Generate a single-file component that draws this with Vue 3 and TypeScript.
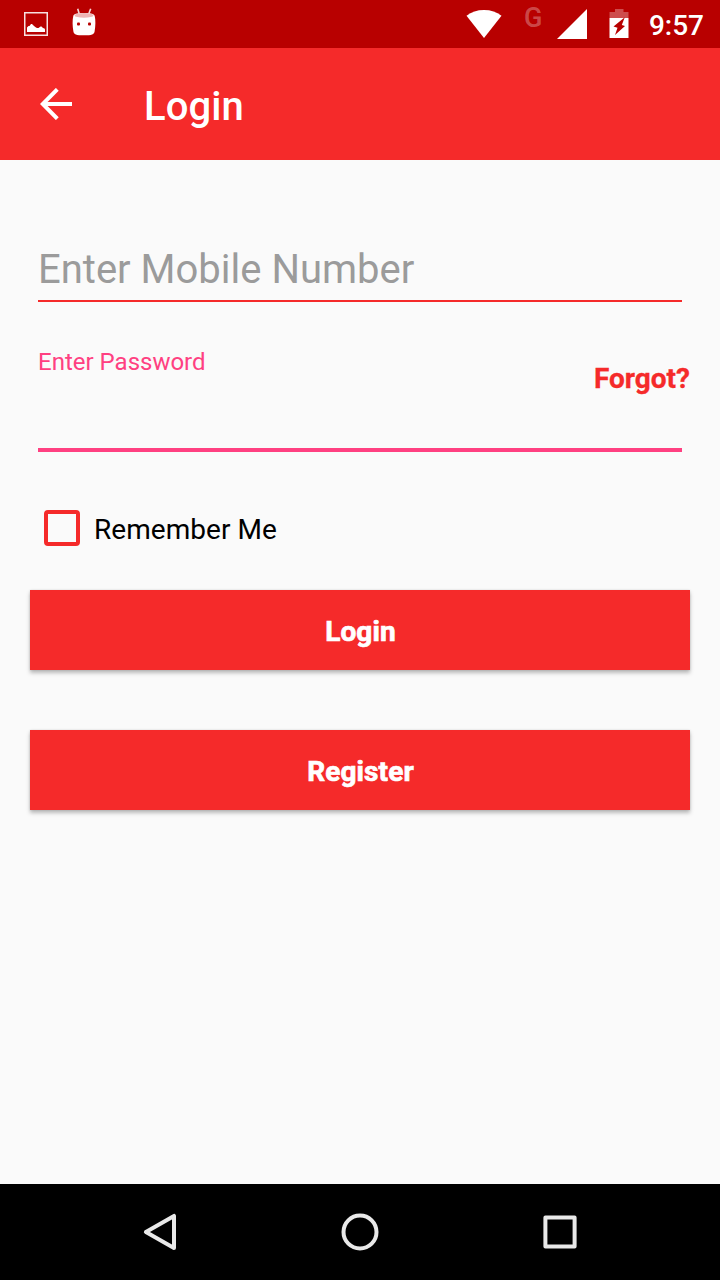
<script setup lang="ts">
import { ref } from 'vue'

const mobile = ref<string>('')
const password = ref<string>('')
const remember = ref<boolean>(false)
const actions: string[] = ['Login', 'Register']
</script>

<template>
  <div class="screen">
    <header class="status">
      <div class="notifications">
        <svg width="24" height="24" viewBox="0 0 24 24">
          <rect x="0.75" y="0.75" width="22.5" height="22.5" fill="none" stroke="#fff" stroke-opacity=".88" stroke-width="1.5" />
          <path d="M3 20v-4.500l1.500-1.500h1l1.500-2h1l2 2 2 1.500 1 .5h1.500l2-1.500h1l1.500 1.500 1.500 .5 .5 1v2.500z" fill="#fff" />
        </svg>
        <svg width="24" height="28" viewBox="0 0 24 28">
          <path d="M5.700 .8l1.500 5M18.700 .8l-1.900 5" fill="none" stroke="#fff" stroke-opacity=".85" stroke-width="1.600" />
          <path d="M1.300 8C1.800 6 4 5 12 5s10.200 1 10.700 3c1 4 .9 10-.1 15.500-.5 3-2.600 3.800-10.600 3.800S1.900 26.500 1.400 23.500C.4 18 .3 12 1.300 8z" fill="#fff" />
          <ellipse cx="12" cy="7.400" rx="9.500" ry="2.400" fill="#efb5b5" />
          <rect x="5" y="14.500" width="3" height="3" rx="1" fill="#b80000" />
          <rect x="16" y="14.500" width="3" height="3" rx="1" fill="#b80000" />
        </svg>
      </div>
      <div class="system">
        <svg class="wifi" width="36" height="28" viewBox="0 0 36 28">
          <path d="M.5 5.800C5.500 2 11 0 18 0s12.500 2 17.500 5.800L18 28z" fill="#fff" />
        </svg>
        <span class="network">G</span>
        <svg class="signal" width="30" height="30" viewBox="0 0 30 30">
          <path d="M30 0v30H0z" fill="#fff" />
        </svg>
        <svg class="battery" width="20" height="29" viewBox="0 0 20 29">
          <path d="M6 0h8.500v3h5v6H.5V3H6z" fill="#fff" fill-opacity=".3" />
          <path d="M.5 9h19v20H.5z" fill="#fff" />
          <path d="M15.800 8.300l-3 7.700 3.200 1L6 26l2.500-7.300-4-1.200z" fill="#b80000" />
        </svg>
        <span class="clock">9:57</span>
      </div>
    </header>

    <div class="toolbar">
      <svg class="back" width="32" height="32" viewBox="0 0 32 32">
        <path d="M17.300 1.300L2.700 16l14.600 14.700M2.700 16H32" fill="none" stroke="#fff" stroke-width="4" />
      </svg>
      <h1>Login</h1>
    </div>

    <main>
      <input v-model="mobile" class="mobile" type="tel" placeholder="Enter Mobile Number" />
      <div class="password-row">
        <label for="password">Enter Password</label>
        <a class="forgot">Forgot?</a>
      </div>
      <input id="password" v-model="password" class="password" type="password" />
      <label class="remember">
        <input v-model="remember" type="checkbox" />
        <span>Remember Me</span>
      </label>
      <button v-for="action in actions" :key="action" type="button">{{ action }}</button>
    </main>

    <nav>
      <svg width="40" height="40" viewBox="0 0 40 40">
        <path d="M5.900 20L34 3.900V36.100z" fill="none" stroke="#e9e9e9" stroke-width="4" stroke-linejoin="round" />
      </svg>
      <svg width="40" height="40" viewBox="0 0 40 40">
        <circle cx="20" cy="20" r="16.500" fill="none" stroke="#e9e9e9" stroke-width="4" />
      </svg>
      <svg width="40" height="40" viewBox="0 0 40 40">
        <rect x="5.400" y="5.400" width="29.200" height="29.200" fill="none" stroke="#e9e9e9" stroke-width="4" stroke-linejoin="round" />
      </svg>
    </nav>
  </div>
</template>

<style>
body {
  margin: 0;
}
</style>

<style scoped>
.screen {
  display: flex;
  flex-direction: column;
  width: 720px;
  height: 1280px;
  overflow: hidden;
  background: #fafafa;
  font-family: Roboto, sans-serif;
}
svg {
  display: block;
  flex: none;
}
.status {
  display: flex;
  justify-content: space-between;
  height: 48px;
  box-sizing: border-box;
  padding: 0 16px 0 24px;
  background: #b80000;
  color: #fff;
}
.notifications {
  display: flex;
  gap: 24px;
  height: 36px;
  padding-top: 8px;
  box-sizing: border-box;
  align-items: flex-end;
}
.system {
  display: flex;
  align-items: flex-start;
}
.wifi {
  margin-top: 10px;
}
.network {
  width: 18px;
  margin: 2px 15px 0 22px;
  font-size: 27px;
  font-weight: 500;
  line-height: 32px;
  color: rgba(255, 255, 255, 0.3);
}
.signal {
  margin-top: 9px;
}
.battery {
  margin: 9px 19.5px 0 22.5px;
}
.clock {
  font-size: 28px;
  font-weight: 500;
  line-height: 52px;
}
.toolbar {
  display: flex;
  align-items: center;
  height: 112px;
  padding-left: 40px;
  background: #f52a2a;
  color: #fff;
}
h1 {
  margin: 6px 0 0 72px;
  font-size: 40px;
  font-weight: 500;
  line-height: 48px;
  letter-spacing: 0.1px;
}
main {
  display: flex;
  flex: 1;
  flex-direction: column;
  padding: 78px 30px 0;
}
input {
  box-sizing: border-box;
  margin: 0;
  padding: 0;
  border: 0;
  border-radius: 0;
  background: transparent;
  font-family: inherit;
  outline: none;
}
.mobile {
  height: 64px;
  margin: 0 8px;
  border-bottom: 2px solid #f52a2a;
  font-size: 40px;
}
.mobile::placeholder {
  color: #9b9b9b;
  opacity: 1;
}
.password-row {
  display: flex;
  justify-content: space-between;
  height: 58px;
  margin-top: 44px;
  padding-left: 8px;
}
.password-row label {
  color: #ff4081;
  font-size: 24px;
  line-height: 32px;
}
.forgot {
  color: #f52a2a;
  font-size: 28px;
  font-weight: 700;
  line-height: 66px;
  -webkit-text-stroke: 0.3px #f52a2a;
}
.password {
  height: 48px;
  margin: 0 8px;
  border-bottom: 4px solid #ff4081;
  font-size: 36px;
}
.remember {
  display: flex;
  align-items: center;
  gap: 14px;
  height: 36px;
  margin: 58px 0 44px 14px;
  color: #000;
  font-size: 28px;
  letter-spacing: 0.05px;
}
.remember input {
  appearance: none;
  width: 36px;
  height: 36px;
  border: 4px solid #f52a2a;
  border-radius: 4px;
}
.remember span {
  padding-top: 3px;
}
button {
  height: 80px;
  margin: 0 0 60px;
  padding: 3px 0 0 1px;
  border: 0;
  background: #f52a2a;
  box-shadow: 0 3px 4px rgba(0, 0, 0, 0.26), 0 0 2px rgba(0, 0, 0, 0.12);
  color: #fff;
  font-family: inherit;
  font-size: 28px;
  font-weight: 700;
  letter-spacing: 0.1px;
  -webkit-text-stroke: 0.7px #fff;
}
nav {
  display: flex;
  align-items: center;
  justify-content: center;
  gap: 160px;
  height: 96px;
  background: #000;
}
</style>
